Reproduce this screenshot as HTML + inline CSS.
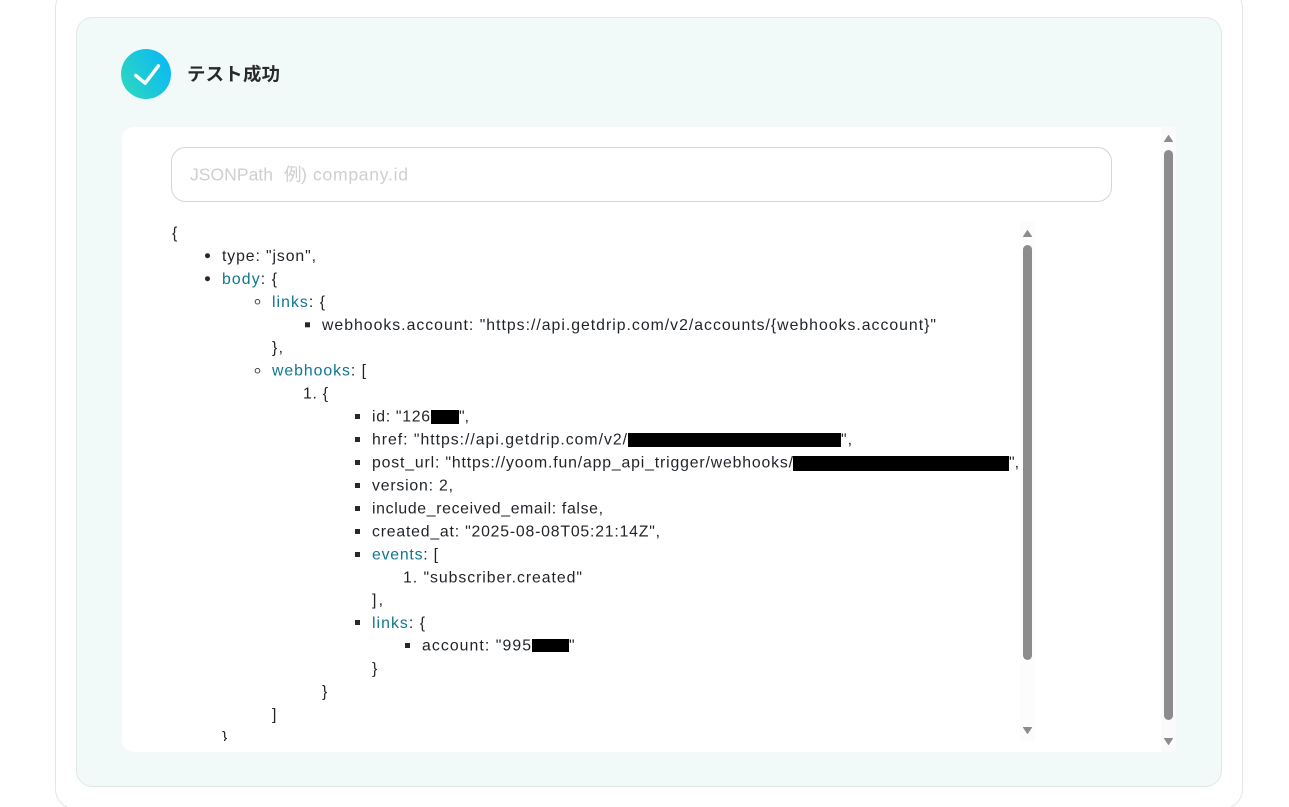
<!DOCTYPE html>
<html lang="ja"><head><meta charset="utf-8"><title>テスト成功</title>
<style>
html,body{margin:0;padding:0;width:1289px;height:807px;overflow:hidden;background:#fff}
svg{display:block;position:absolute;left:0;top:0}
.c text{font-family:"Liberation Sans","Noto Sans CJK JP",sans-serif;font-size:15.800px;fill:#1f2328}
.k{fill:#0f7690}
.a{fill:#8c8c8c;stroke:#8c8c8c;stroke-width:1;stroke-linejoin:round}
.p{font-family:"Liberation Sans","Noto Sans CJK JP",sans-serif;font-size:17.500px;fill:#cfcfcf}
</style></head><body>
<svg width="1289" height="807" viewBox="0 0 1289 807" xmlns="http://www.w3.org/2000/svg">
<defs>
<linearGradient id="g" x1="0" y1="0.85" x2="1" y2="0.3"><stop offset="0" stop-color="#2dd8c0"/><stop offset="1" stop-color="#0cb9f2"/></linearGradient>
<clipPath id="clip"><rect x="122" y="222" width="898" height="519"/></clipPath>
</defs>
<rect width="1289" height="807" fill="#fff"/>
<rect x="55.500" y="-12" width="1187" height="821" rx="20" fill="#fff" stroke="#e4e4ea"/>
<rect x="76.500" y="17.500" width="1145" height="769" rx="16" fill="#f2faf9" stroke="#e2e6e6"/>
<path d="M134 127H1176V752H134a12 12 0 0 1-12-12V139a12 12 0 0 1 12-12z" fill="#fff"/>
<circle cx="146" cy="74" r="25" fill="url(#g)"/>
<path d="M135.800 75.500L145.200 83.200L158.400 65.800" fill="none" stroke="#fff" stroke-width="3.400" stroke-linecap="round" stroke-linejoin="round"/>
<text x="187" y="80.500" textLength="93" lengthAdjust="spacing" style="font-family:'Liberation Sans','Noto Sans CJK JP',sans-serif;font-size:18.400px;font-weight:700;fill:#27292b">テスト成功</text>
<rect x="171.500" y="147.500" width="940" height="54" rx="14" fill="#fff" stroke="#d4d6dc"/>
<text class="p" x="190" y="180.500" textLength="83">JSONPath</text>
<text class="p" x="284" y="180.500" textLength="23">例)</text>
<text class="p" x="313" y="180.500" textLength="95">company.id</text>
<rect x="1161" y="127" width="15" height="625" fill="#fafafa"/>
<rect x="1164" y="150" width="9" height="570" rx="4.500" fill="#8c8c8c"/>
<path class="a" d="M1168.500 135.500l4 6h-8z"/>
<path class="a" d="M1168.500 744.500l4-6h-8z"/>
<rect x="1020" y="222" width="15" height="520" fill="#fcfcfc"/>
<rect x="1023" y="245" width="9" height="415" rx="4.500" fill="#8c8c8c"/>
<path class="a" d="M1027.500 230.500l4 6h-8z"/>
<path class="a" d="M1027.500 733.500l4-6h-8z"/>
<g class="c" clip-path="url(#clip)">
<text x="172" y="238">{</text>
<circle cx="207.500" cy="255.700" r="2.500" fill="#24292f"/>
<text x="222" y="261" textLength="94">type: "json",</text>
<circle cx="207.500" cy="278.700" r="2.500" fill="#24292f"/>
<text x="222" y="284" textLength="55"><tspan class="k">body</tspan>: {</text>
<circle cx="257.500" cy="301.700" r="2.300" fill="none" stroke="#444" stroke-width="1"/>
<text x="272" y="307" textLength="53"><tspan class="k">links</tspan>: {</text>
<rect x="305" y="322.300" width="5" height="5" fill="#24292f"/>
<text x="322" y="330" textLength="614">webhooks.account: "https://api.getdrip.com/v2/accounts/{webhooks.account}"</text>
<text x="272" y="352.500" textLength="11">},</text>
<circle cx="257.500" cy="370.700" r="2.300" fill="none" stroke="#444" stroke-width="1"/>
<text x="272" y="375.500" textLength="94"><tspan class="k">webhooks</tspan>: [</text>
<text x="303" y="398.500" textLength="25">1. {</text>
<rect x="355" y="414" width="5" height="5" fill="#24292f"/>
<text x="372" y="421.500" textLength="58">id: "126</text>
<rect x="431" y="410" width="28" height="14" fill="#000"/>
<text x="459" y="421.500" textLength="10">",</text>
<rect x="355" y="437" width="5" height="5" fill="#24292f"/>
<text x="372" y="444.500" textLength="255">href: "https://api.getdrip.com/v2/</text>
<rect x="628" y="433" width="213" height="14" fill="#000"/>
<text x="841" y="444.500" textLength="11">",</text>
<rect x="355" y="460" width="5" height="5" fill="#24292f"/>
<text x="372" y="467.500" textLength="421">post_url: "https://yoom.fun/app_api_trigger/webhooks/</text>
<rect x="793" y="456" width="216" height="15" fill="#000"/>
<text x="1009" y="467.500" textLength="10">",</text>
<rect x="355" y="483" width="5" height="5" fill="#24292f"/>
<text x="372" y="490.500" textLength="81">version: 2,</text>
<rect x="355" y="506" width="5" height="5" fill="#24292f"/>
<text x="372" y="513.500" textLength="231">include_received_email: false,</text>
<rect x="355" y="529" width="5" height="5" fill="#24292f"/>
<text x="372" y="536.500" textLength="288">created_at: "2025-08-08T05:21:14Z",</text>
<rect x="355" y="552" width="5" height="5" fill="#24292f"/>
<text x="372" y="559.500" textLength="66"><tspan class="k">events</tspan>: [</text>
<text x="403" y="582.500" textLength="179">1. "subscriber.created"</text>
<text x="372" y="605" textLength="11">],</text>
<rect x="355" y="620" width="5" height="5" fill="#24292f"/>
<text x="372" y="628" textLength="53"><tspan class="k">links</tspan>: {</text>
<rect x="405" y="643" width="5" height="5" fill="#24292f"/>
<text x="422" y="650.500" textLength="109">account: "995</text>
<rect x="532" y="639" width="37" height="13" fill="#000"/>
<text x="569" y="650.500">"</text>
<text x="372" y="673.500">}</text>
<text x="322" y="696.500">}</text>
<text x="272" y="719.500">]</text>
<text x="222" y="742.500">}</text>
</g>
</svg>
</body></html>
